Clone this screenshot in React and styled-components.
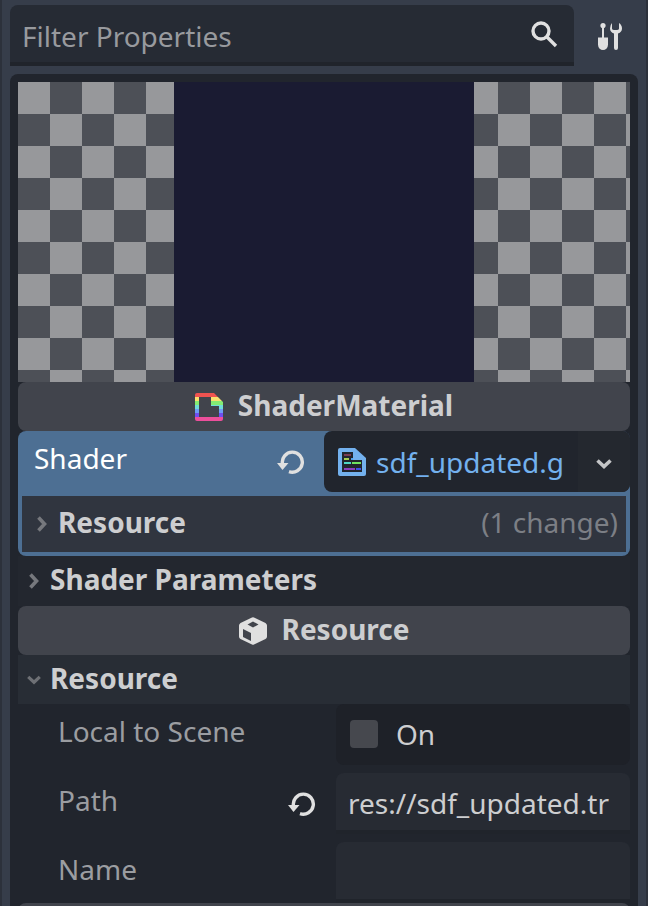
import styled, { createGlobalStyle } from 'styled-components'

const GlobalStyle = createGlobalStyle`
    html, body {
        margin: 0;
        padding: 0;
        background: #363d4a;
    }
    * {
        box-sizing: border-box;
    }
    svg {
        display: block;
    }
`

const ResetIcon = () => (
    <svg width="28" height="24" viewBox="0 0 28 24" fill="none">
        <path d="M5.5 14 A10 10 0 1 1 12 21.6" stroke="#e0e0e0" strokeWidth="3.4" />
        <path d="M0 13 H11.5 L5.5 20 Z" fill="#e0e0e0" />
    </svg>
)

const ChevronRight = () => (
    <svg width="12" height="18" viewBox="0 0 12 18" fill="none">
        <path d="M2.5 2.5 L8.5 9 L2.5 15.5" stroke="#76787d" strokeWidth="3.6" />
    </svg>
)

const ChevronDown = ({ color = '#6e7075' }) => (
    <svg width="18" height="12" viewBox="0 0 18 12" fill="none">
        <path d="M2.5 2.5 L9 8.5 L15.5 2.5" stroke={color} strokeWidth="3.6" />
    </svg>
)

const rainbow = ['#ef5350', '#f9e06e', '#84ec72', '#6fdcd8', '#6d9cf5', '#6f4ef0', '#ec4f9b']

const ShaderMaterialIcon = () => (
    <svg width="28" height="28" viewBox="0 0 28 28" fill="none">
        <defs>
            <linearGradient id="rainbow" x1="0" y1="0" x2="0" y2="1">
                {rainbow.flatMap((c, i) => [
                    <stop key={c + 'a'} offset={i / rainbow.length} stopColor={c} />,
                    <stop key={c + 'b'} offset={(i + 1) / rainbow.length} stopColor={c} />,
                ])}
            </linearGradient>
        </defs>
        <path
            fillRule="evenodd"
            fill="url(#rainbow)"
            d="M2 0 H19 L28 9 V26 Q28 28 26 28 H2 Q0 28 0 26 V2 Q0 0 2 0 Z M4 4 V24 H24 V13 H16 V4 Z"
        />
    </svg>
)

const CubeIcon = () => (
    <svg width="28" height="28" viewBox="0 0 28 28">
        <path fill="#e0e0e0" d="M13 0.5 Q14 0 15 0.5 L26.5 6 Q28 7 28 8.5 V19.5 Q28 21 26.5 22 L15 27.5 Q14 28 13 27.5 L1.5 22 Q0 21 0 19.5 V8.5 Q0 7 1.5 6 Z" />
        <path fill="#41444c" d="M14 4.5 L19.5 7.5 L14 10.5 L8.5 7.5 Z" />
        <path fill="#41444c" d="M4 12 L12 16 V24 L4 20 Z" />
    </svg>
)

const ShaderFileIcon = () => (
    <svg width="28" height="28" viewBox="0 0 28 28">
        <path fill="#73b1ee" d="M2 0 H17 L28 10 V26 Q28 28 26 28 H2 Q0 28 0 26 V2 Q0 0 2 0 Z" />
        <path fill="#21252d" d="M4 4 H15 V12 H24 V24 H4 Z" />
        <rect x="6" y="6" width="7" height="2" fill="#7a3b52" />
        <rect x="6" y="10" width="5" height="2" fill="#a6c94f" />
        <rect x="13" y="10" width="2" height="2" fill="#4f9de8" />
        <rect x="6" y="14" width="7" height="2" fill="#4ed6c6" />
        <rect x="14" y="14" width="9" height="2" fill="#6fe25f" />
        <rect x="6" y="20" width="11" height="2" fill="#8a3fc0" />
        <rect x="18" y="20" width="5" height="2" fill="#3f4fe8" />
    </svg>
)

const SearchIcon = () => (
    <svg width="28" height="28" viewBox="0 0 28 28" fill="none">
        <circle cx="11" cy="11" r="8" stroke="#e0e0e0" strokeWidth="3.4" />
        <path d="M16.5 16.5 L26 26" stroke="#e0e0e0" strokeWidth="3.4" />
    </svg>
)

const ToolsIcon = () => (
    <svg width="24" height="28" viewBox="0 0 24 28" fill="#e0e0e0">
        <circle cx="5" cy="3.5" r="2.6" />
        <rect x="4" y="5" width="2" height="11" />
        <path d="M0 15.5 H10 V22.5 A5 5.5 0 0 1 0 22.5 Z" />
        <path d="M14 1 V6.5 Q14 8 17.5 8 Q21 8 21 6.5 V1 Q24 3 24 6.5 Q24 10 20 11.5 V26 Q20 28 18 28 Q16 28 16 26 V11.5 Q12 10 12 6.5 Q12 3 14 1 Z" />
    </svg>
)

const App = () => {
    return (
        <>
            <GlobalStyle />
            <Page>
                <TopBar>
                    <SearchBox>
                        <Placeholder>Filter Properties</Placeholder>
                        <SearchIcon />
                    </SearchBox>
                    <ToolsButton>
                        <ToolsIcon />
                    </ToolsButton>
                </TopBar>
                <Panel>
                    <Preview>
                        <PreviewSquare />
                    </Preview>
                    <ClassBar>
                        <ShaderMaterialIcon />
                        <ClassName>ShaderMaterial</ClassName>
                    </ClassBar>
                    <ShaderGroup>
                        <ShaderRow>
                            <ShaderLabel>Shader</ShaderLabel>
                            <ShaderReset>
                                <ResetIcon />
                            </ShaderReset>
                            <Picker>
                                <PickerMain>
                                    <ShaderFileIcon />
                                    <FileName>sdf_updated.g</FileName>
                                </PickerMain>
                                <PickerArrow>
                                    <ChevronDown color="#c4c5c7" />
                                </PickerArrow>
                            </Picker>
                        </ShaderRow>
                        <SubResource>
                            <ChevronSlot>
                                <ChevronRight />
                            </ChevronSlot>
                            <SectionTitle>Resource</SectionTitle>
                            <ChangeCount>(1 change)</ChangeCount>
                        </SubResource>
                    </ShaderGroup>
                    <SectionRow $height={50} $flat>
                        <ChevronSlot>
                            <ChevronRight />
                        </ChevronSlot>
                        <SectionTitle>Shader Parameters</SectionTitle>
                    </SectionRow>
                    <ClassBar>
                        <CubeIcon />
                        <ClassName>Resource</ClassName>
                    </ClassBar>
                    <SectionRow $height={49}>
                        <ChevronSlot>
                            <ChevronDown />
                        </ChevronSlot>
                        <SectionTitle>Resource</SectionTitle>
                    </SectionRow>
                    <Properties>
                        <Property>
                            <PropertyName>Local to Scene</PropertyName>
                            <CheckControl>
                                <CheckBox />
                                <CheckText>On</CheckText>
                            </CheckControl>
                        </Property>
                        <Property>
                            <PropertyName>Path</PropertyName>
                            <RowReset>
                                <ResetIcon />
                            </RowReset>
                            <TextInput>res://sdf_updated.tr</TextInput>
                        </Property>
                        <Property>
                            <PropertyName>Name</PropertyName>
                            <TextInput />
                        </Property>
                    </Properties>
                    <BottomBar />
                </Panel>
            </Page>
        </>
    )
}

export default App

const Page = styled.div`
    width: 648px;
    height: 906px;
    overflow: hidden;
    background: #363d4a;
    padding: 5px 8px 0;
    border-left: 2px solid #2c313b;
    border-right: 2px solid #2c313b;
    font-family: "Noto Sans", sans-serif;
    font-size: 28px;
    display: flex;
    flex-direction: column;
`

const TopBar = styled.div`
    display: flex;
    height: 61px;
    flex-shrink: 0;
`

const SearchBox = styled.div`
    width: 564px;
    display: flex;
    align-items: center;
    justify-content: space-between;
    padding: 0 16px 0 12px;
    background: #262b34;
    border-bottom: 4px solid #20242b;
    border-radius: 8px 8px 0 0;
`

const Placeholder = styled.span`
    color: #989a9e;
    margin-top: 4px;
`

const ToolsButton = styled.div`
    flex: 1;
    display: flex;
    align-items: center;
    justify-content: center;
    padding-left: 8px;
`

const Panel = styled.div`
    margin-top: 8px;
    width: 628px;
    flex: 1;
    padding: 8px 8px 0;
    background: #21252d;
    border-radius: 8px 8px 0 0;
    overflow: hidden;
`

const Preview = styled.div`
    height: 300px;
    display: flex;
    justify-content: center;
    background-image: conic-gradient(from 90deg, #97989b 25%, #4d5057 0 50%, #97989b 0 75%, #4d5057 0);
    background-size: 64px 64px;
`

const PreviewSquare = styled.div`
    width: 300px;
    height: 300px;
    background: #1a1b32;
`

const ClassBar = styled.div`
    height: 49px;
    display: flex;
    align-items: center;
    justify-content: center;
    gap: 14px;
    background: #41444c;
    border-radius: 8px;
`

const ClassName = styled.span`
    color: #cdced0;
    font-weight: 700;
    margin: 0 0 4px 1px;
`

const ShaderGroup = styled.div`
    height: 125px;
    display: flex;
    flex-direction: column;
    background: #4d6f93;
    border-radius: 8px;
`

const ShaderRow = styled.div`
    height: 65px;
    flex-shrink: 0;
    display: flex;
    align-items: flex-start;
    padding-left: 16px;
`

const ShaderLabel = styled.span`
    width: 230px;
    margin-top: 8px;
    color: #ffffff;
`

const ShaderReset = styled.div`
    width: 60px;
    padding: 19px 0 0 13px;
`

const Picker = styled.div`
    flex: 1;
    height: 61px;
    display: flex;
    background: #21252d;
    border-radius: 8px;
    overflow: hidden;
`

const PickerMain = styled.div`
    width: 254px;
    display: flex;
    align-items: center;
    gap: 10px;
    padding: 0 0 0 14px;
    white-space: nowrap;
    overflow: hidden;
`

const FileName = styled.span`
    color: #73b1ee;
`

const PickerArrow = styled.div`
    flex: 1;
    display: flex;
    align-items: center;
    justify-content: center;
    padding-top: 4px;
    background: #24282f;
`

const SubResource = styled.div`
    flex: 1;
    margin: 0 4px 4px;
    display: flex;
    align-items: center;
    padding: 0 8px 0 12px;
    background: #30353f;
`

const ChevronSlot = styled.span`
    width: 16px;
    margin-right: 8px;
    display: flex;
    align-items: center;
    justify-content: center;
`

const SectionTitle = styled.span`
    color: #cdced0;
    font-weight: 700;
    margin-bottom: 4px;
`

const ChangeCount = styled.span`
    margin: 0 0 4px auto;
    color: #7c7f85;
`

const SectionRow = styled.div`
    height: ${(props) => props.$height}px;
    display: flex;
    align-items: center;
    padding-left: 8px;
    background: ${(props) => (props.$flat ? '#23272f' : '#282d35')};
`

const Properties = styled.div`
    display: flex;
    flex-direction: column;
    gap: 8px;
`

const Property = styled.div`
    height: 61px;
    display: flex;
    align-items: flex-start;
    padding-left: 40px;
    position: relative;
`

const PropertyName = styled.span`
    margin-top: 8px;
    color: #9b9da1;
`

const CheckControl = styled.div`
    position: absolute;
    left: 318px;
    right: 0;
    top: 0;
    height: 61px;
    display: flex;
    align-items: center;
    padding: 0 0 2px 14px;
    gap: 18px;
    background: #1e2128;
    border-radius: 8px;
`

const CheckBox = styled.div`
    width: 28px;
    height: 28px;
    background: #46484e;
    border-radius: 4px;
`

const CheckText = styled.span`
    color: #cdced0;
`

const RowReset = styled.div`
    position: absolute;
    left: 270px;
    top: 19px;
`

const TextInput = styled.div`
    position: absolute;
    left: 318px;
    right: 0;
    top: 0;
    height: 61px;
    padding: 11px 0 0 12px;
    color: #cdced0;
    background: #272b33;
    border-bottom: 4px solid #20242b;
    border-radius: 8px 8px 0 0;
`

const BottomBar = styled.div`
    height: 20px;
    background: #41444c;
    border-radius: 8px 8px 0 0;
`
